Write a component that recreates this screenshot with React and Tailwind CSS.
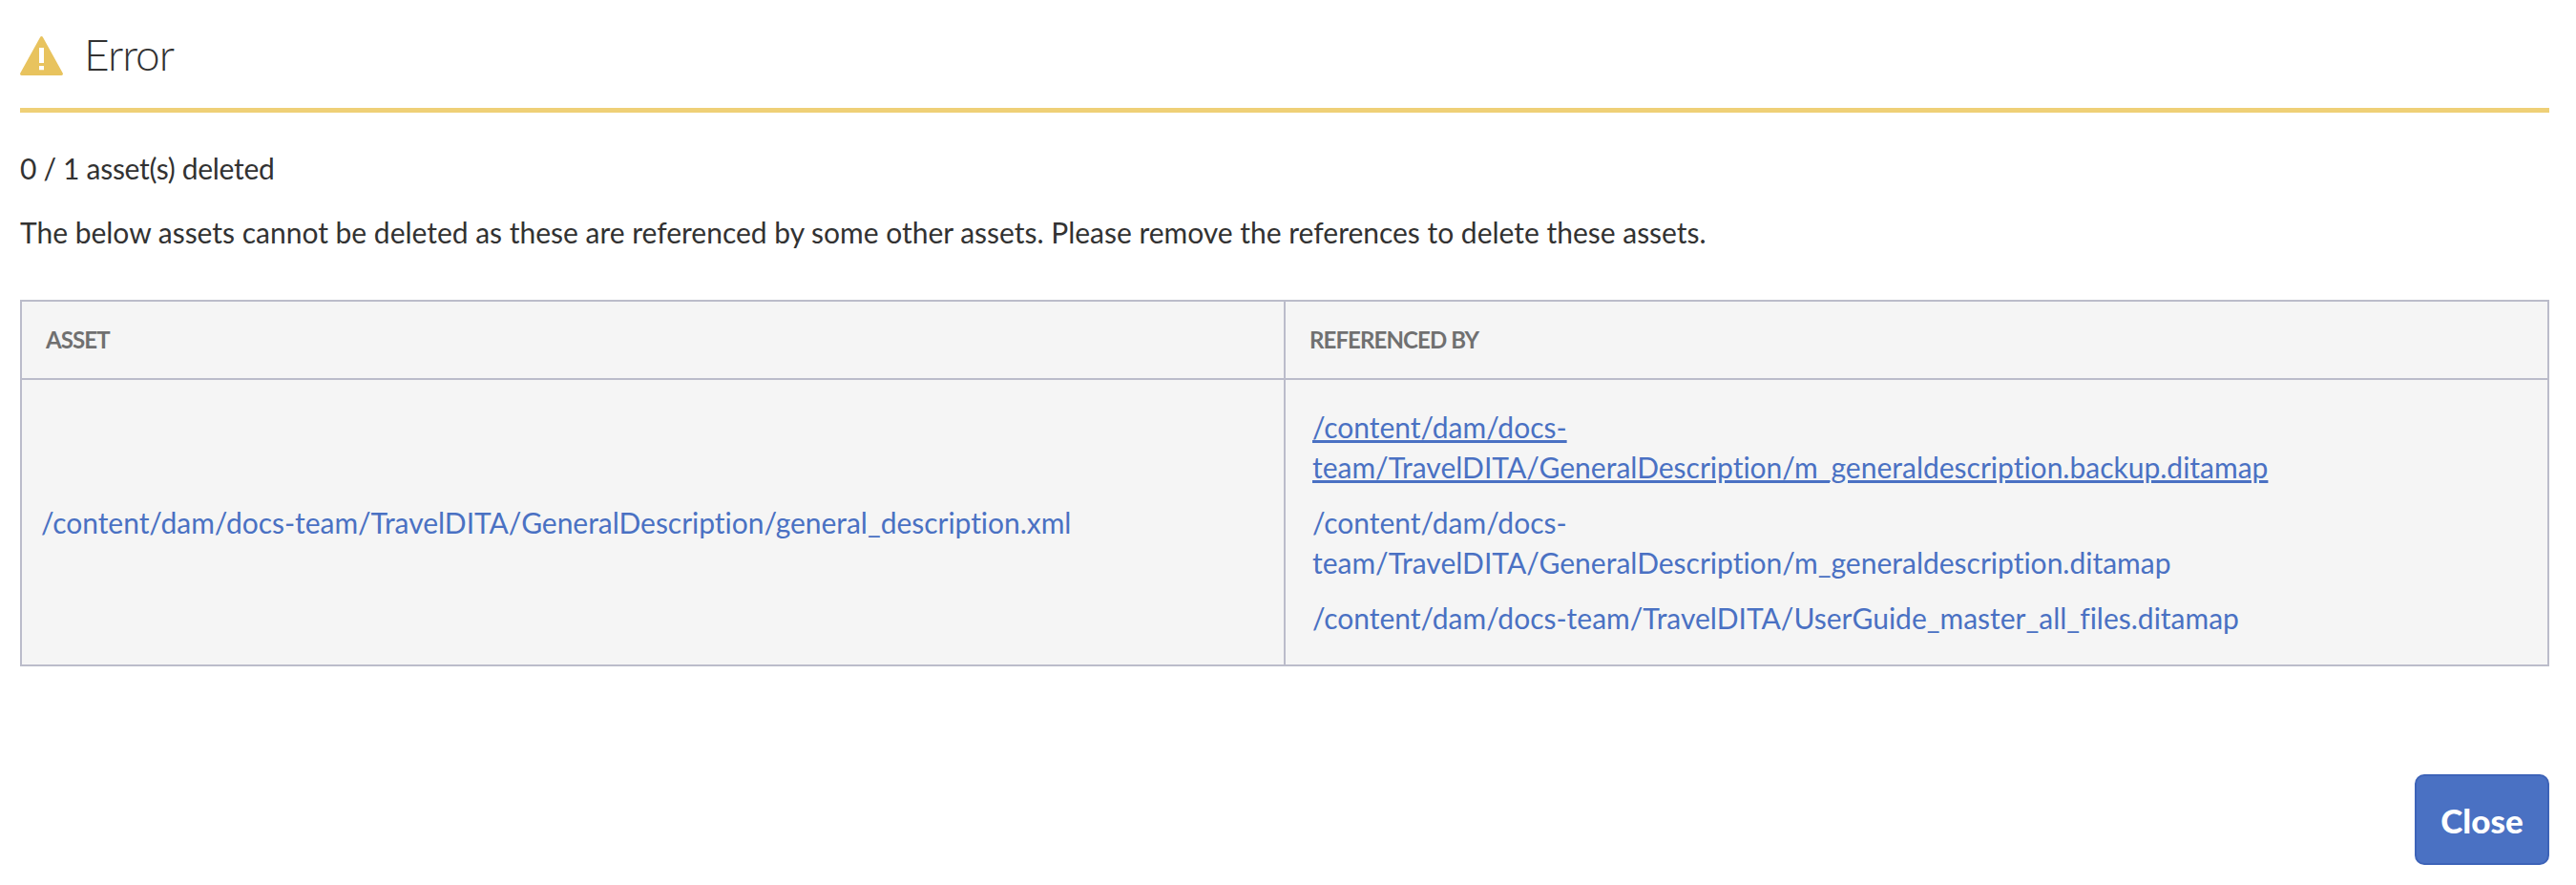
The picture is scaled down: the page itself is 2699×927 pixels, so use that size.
const assets = [
  {
    path: "/content/dam/docs-team/TravelDITA/GeneralDescription/general_description.xml",
    references: [
      { path: "/content/dam/docs-team/TravelDITA/GeneralDescription/m_generaldescription.backup.ditamap", active: true },
      { path: "/content/dam/docs-team/TravelDITA/GeneralDescription/m_generaldescription.ditamap" },
      { path: "/content/dam/docs-team/TravelDITA/UserGuide_master_all_files.ditamap" },
    ],
  },
];

function AlertIcon() {
  return (
    <svg className="h-[41px] w-[45px] shrink-0" viewBox="0 0 45 41">
      <path
        fill="#e8c35e"
        fillRule="evenodd"
        d="M21.2 .8a1.5 1.5 0 0 1 2.6 0L44.7 38.6A1.6 1.6 0 0 1 43.3 41H1.7A1.6 1.6 0 0 1 .3 38.6ZM20 12v16h5V12ZM20 31v4.2h5V31Z"
      />
    </svg>
  );
}

function DialogHeader() {
  return (
    <header className="flex h-[98px] items-start border-b-5 border-[#efd077]">
      <div className="pt-[18px]">
        <AlertIcon />
      </div>
      <h1 className="ml-[22px] pt-[7px] text-[46px] leading-[60px] font-light tracking-[-1px]">Error</h1>
    </header>
  );
}

function ReferenceTable() {
  return (
    <table className="mt-[50px] w-full table-fixed border-collapse bg-[#f5f5f5] text-left">
      <thead>
        <tr className="h-[82px] text-[24px] leading-[30px] font-bold text-[#707070] uppercase">
          <th className="border-2 border-[#bbbcca] py-0 pr-0 pl-[25px] tracking-[-0.9px]">Asset</th>
          <th className="border-2 border-[#bbbcca] py-0 pr-0 pl-[25px] tracking-[-0.9px]">Referenced by</th>
        </tr>
      </thead>
      <tbody>
        {assets.map((asset) => (
          <tr key={asset.path} className="text-[#4a71c3]">
            <td className="border-2 border-[#bbbcca] py-0 pr-0 pl-[20px] align-middle">
              <a className="tracking-[-0.03px]">{asset.path}</a>
            </td>
            <td className="border-2 border-[#bbbcca] py-[28px] pr-[270px] pl-[28px]">
              <ul className="flex flex-col gap-4">
                {asset.references.map((ref) => (
                  <li key={ref.path}>
                    <a className={ref.active ? "underline decoration-3 underline-offset-[2px]" : ""}>{ref.path}</a>
                  </li>
                ))}
              </ul>
            </td>
          </tr>
        ))}
      </tbody>
    </table>
  );
}

export default function App() {
  return (
    <main className="flex h-[927px] flex-col bg-white pt-5 pr-[28px] pl-[21px] font-['Lato',sans-serif] text-[30px] leading-[42px] text-[#323232] [font-variant-ligatures:none]">
      <DialogHeader />
      <p className="mt-[37px] tracking-[-0.3px]">0 / 1 asset(s) deleted</p>
      <p className="mt-[25px] tracking-[-0.01px]">
        The below assets cannot be deleted as these are referenced by some other assets. Please remove the references to
        delete these assets.
      </p>
      <ReferenceTable />
      <footer className="mt-[113px] flex justify-end">
        <button className="flex h-[95px] w-[141px] items-center justify-center rounded-[10px] border-2 border-[#3d63b8] bg-[#4a71c3] text-[35px] leading-[42px] font-black text-white">
          Close
        </button>
      </footer>
    </main>
  );
}
